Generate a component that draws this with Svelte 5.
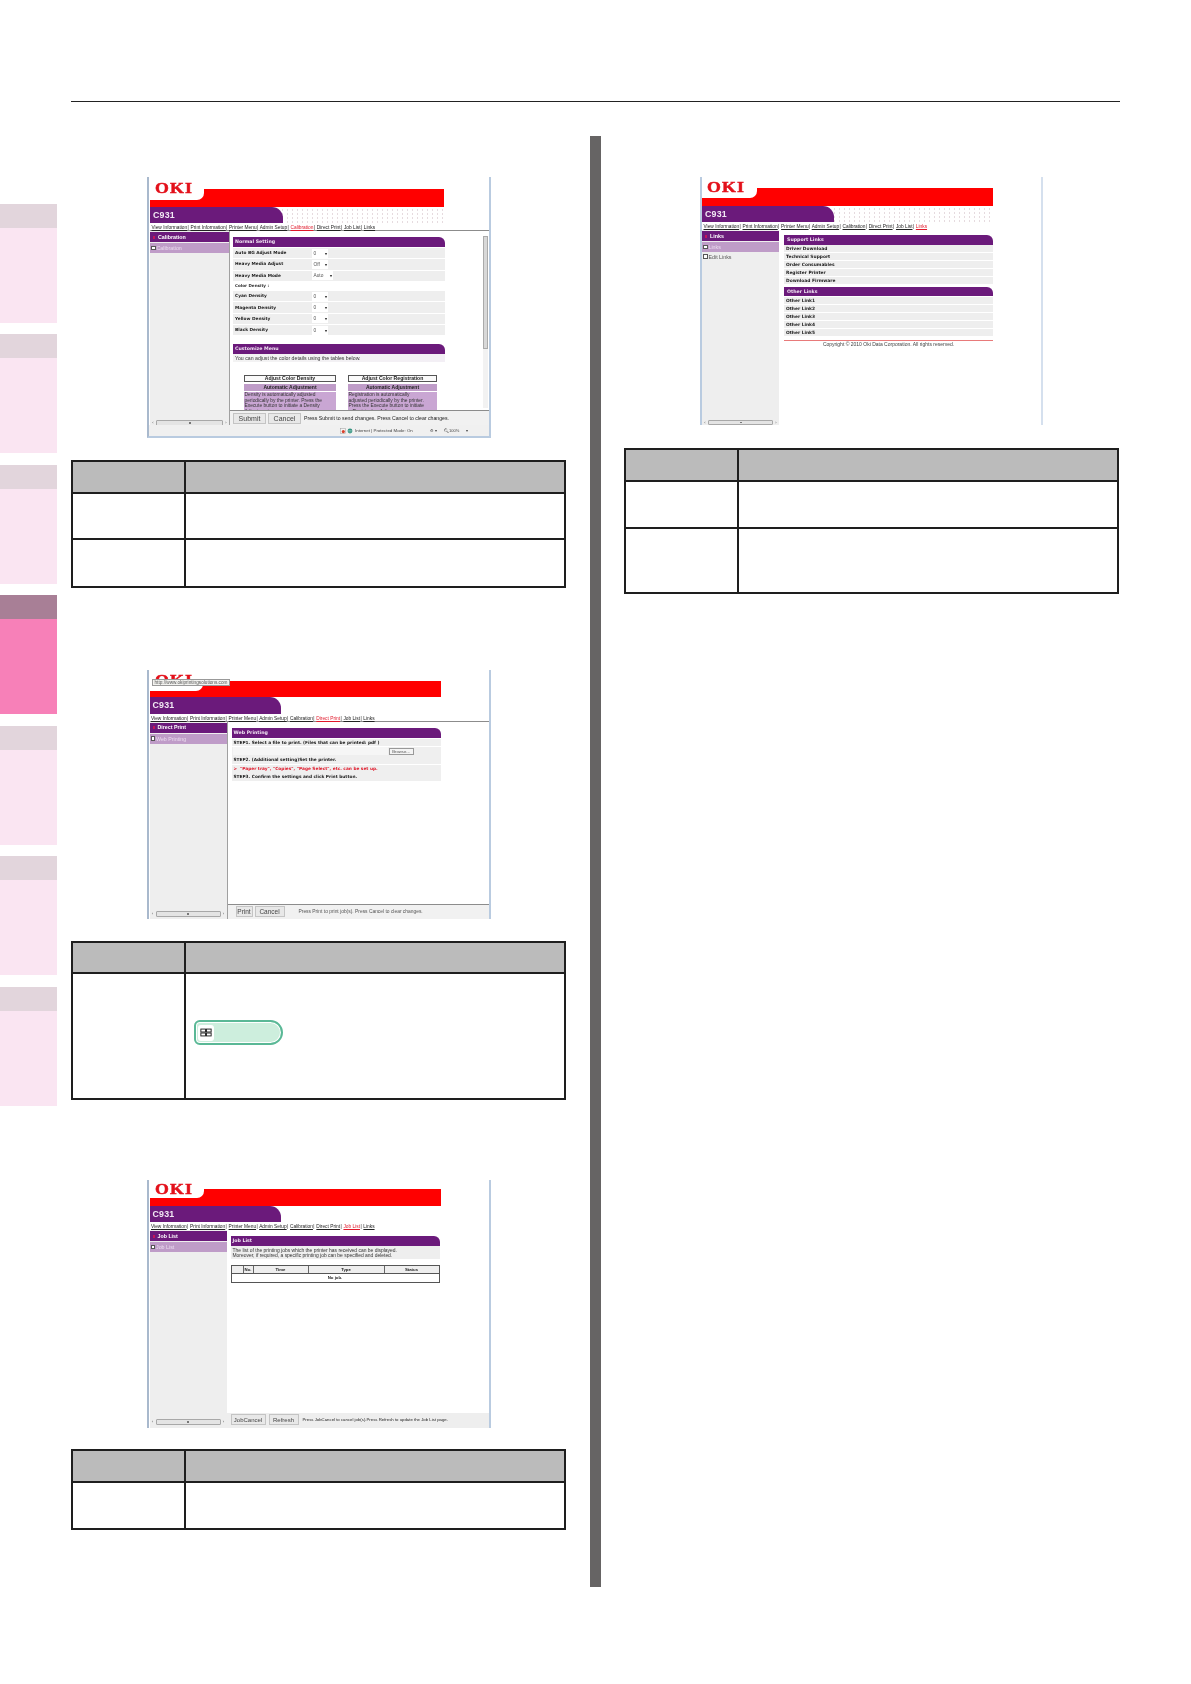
<script>
  const navItems = ['View Information', 'Print Information', 'Printer Menu', 'Admin Setup', 'Calibration', 'Direct Print', 'Job List', 'Links'];

  const tabs = [false, false, false, true, false, false, false];

  const settings = [
    { label: 'Auto BG Adjust Mode', value: '0' },
    { label: 'Heavy Media Adjust', value: 'Off' },
    { label: 'Heavy Media Mode', value: 'Auto', wide: true },
    { label: 'Color Density :', plain: true },
    { label: 'Cyan Density', value: '0' },
    { label: 'Magenta Density', value: '0' },
    { label: 'Yellow Density', value: '0' },
    { label: 'Black Density', value: '0' }
  ];

  const supportLinks = ['Driver Download', 'Technical Support', 'Order Consumables', 'Register Printer', 'Download Firmware'];
  const otherLinks = ['Other Link1', 'Other Link2', 'Other Link3', 'Other Link4', 'Other Link5'];
</script>

{#snippet masthead(active, dots)}
  <div class="mast">
    <div class="notch"><span class="oki">OKI</span></div>
  </div>
  <div class="model-row" class:dots>
    <div class="model">C931</div>
  </div>
  <div class="nav">
    {#each navItems as item, i}
      {#if i > 0}<span class="sep">|</span>{/if}
      <span class="nav-link" class:on={item === active}>{item}</span>
    {/each}
  </div>
{/snippet}

{#snippet sidebar(title, sub, extra)}
  <div class="side">
    <div class="side-head"><i class="tick"></i>{title}</div>
    <div class="side-sub"><i class="bullet"></i>{sub}</div>
    {#if extra}<div class="side-item"><i class="bullet hollow"></i>{extra}</div>{/if}
    <div class="hscroll"><span class="arrow">‹</span><div class="htrack"><i></i></div><span class="arrow">›</span></div>
  </div>
{/snippet}

{#snippet infoTable(rows)}
  <table class="info">
    <tbody>
      <tr class="head" style="height: {rows[0]}px"><th></th><th></th></tr>
      {#each rows.slice(1) as h}
        <tr style="height: {h}px"><td></td><td></td></tr>
      {/each}
    </tbody>
  </table>
{/snippet}

<div class="page">
  <aside class="tabs">
    {#each tabs as active}
      <div class="tab" class:active>
        <div class="tab-head"></div>
        <div class="tab-body"></div>
      </div>
    {/each}
  </aside>

  <main class="main">
    <div class="rule"></div>
    <div class="columns">
      <section class="col">
        <!-- calibration -->
        <div class="shot shot-a">
          {@render masthead('Calibration', true)}
          <div class="body">
            {@render sidebar('Calibration', 'Calibration')}
            <div class="pane">
              <div class="scrollarea">
                <div class="scroll-content">
                  <div class="sec-head">Normal Setting</div>
                  {#each settings as s}
                    {#if s.plain}
                      <div class="set-plain">{s.label}</div>
                    {:else}
                      <div class="set-row">
                        <span class="set-label">{s.label}</span>
                        <span class="sel" class:wide={s.wide}>{s.value}<b>▾</b></span>
                      </div>
                    {/if}
                  {/each}
                  <div class="sec-head second">Customize Menu</div>
                  <div class="desc">You can adjust the color details using the tables below.</div>
                  <div class="cards">
                    <div class="card">
                      <div class="card-title">Adjust Color Density</div>
                      <div class="card-sub">Automatic Adjustment</div>
                      <div class="card-text">Density is automatically adjusted<br />periodically by the printer. Press the<br />Execute button to initiate a Density<br />Adjustment.</div>
                    </div>
                    <div class="card right">
                      <div class="card-title">Adjust Color Registration</div>
                      <div class="card-sub">Automatic Adjustment</div>
                      <div class="card-text">Registration is automatically<br />adjusted periodically by the printer.<br />Press the Execute button to initiate<br />a Registration Adjustment.</div>
                    </div>
                  </div>
                </div>
                <div class="vscroll"><i></i></div>
              </div>
              <div class="foot">
                <span class="btn big">Submit</span>
                <span class="btn big">Cancel</span>
                <span class="foot-text">Press Submit to send changes. Press Cancel to clear changes.</span>
              </div>
            </div>
          </div>
          <div class="status">
            <svg class="st-icon" viewBox="0 0 10 10"><rect x="1" y="1" width="8" height="8" fill="#f4f4f4" stroke="#999" stroke-width=".8"/><circle cx="5.5" cy="6" r="2.6" fill="#d9412b"/></svg>
            <svg class="st-icon" viewBox="0 0 10 10"><circle cx="5" cy="5" r="4" fill="#2f8f7d"/><path d="M2 4h6M2 6.5h6" stroke="#bfe6dc" stroke-width=".8"/></svg>
            <span class="st-text">Internet | Protected Mode: On</span>
            <span class="st-right">⚙ ▾</span>
            <span class="st-zoom">🔍︎100%</span>
            <span class="st-drop">▾</span>
          </div>
        </div>

        {@render infoTable([32, 46, 48])}

        <!-- direct print -->
        <div class="shot shot-b">
          {@render masthead('Direct Print', false)}
          <div class="tooltip">http://www.okiprintingsolutions.com</div>
          <div class="body">
            {@render sidebar('Direct Print', 'Web Printing')}
            <div class="pane">
              <div class="scrollarea">
                <div class="scroll-content">
                  <div class="sec-head">Web Printing</div>
                  <div class="step">STEP1. Select a file to print. (Files that can be printed: pdf )</div>
                  <div class="step file"><i class="file-input"></i><span class="browse">Browse...</span></div>
                  <div class="step">STEP2. (Additional setting)Set the printer.</div>
                  <div class="step red">&gt;&nbsp;&nbsp;"Paper tray", "Copies", "Page Select", etc. can be set up.</div>
                  <div class="step">STEP3. Confirm the settings and click Print button.</div>
                </div>
              </div>
              <div class="foot">
                <span class="btn print">Print</span>
                <span class="btn cancel">Cancel</span>
                <span class="foot-text wide-gap">Press Print to print job(s). Press Cancel to clear changes.</span>
              </div>
            </div>
          </div>
        </div>

        <table class="info">
          <tbody>
            <tr class="head" style="height: 31px"><th></th><th></th></tr>
            <tr style="height: 126px">
              <td></td>
              <td class="note-cell">
                <div class="note">
                  <span class="note-icon">
                    <svg viewBox="0 0 14 10" width="12" height="9"><rect x="1" y="1" width="5.4" height="3.4" fill="#fff" stroke="#222" stroke-width="1.1"/><rect x="7.6" y="1" width="5.4" height="3.4" fill="#fff" stroke="#222" stroke-width="1.1"/><rect x="1" y="5.6" width="5.4" height="3.4" fill="#fff" stroke="#222" stroke-width="1.1"/><rect x="7.6" y="5.6" width="5.4" height="3.4" fill="#fff" stroke="#222" stroke-width="1.1"/></svg>
                  </span>
                </div>
              </td>
            </tr>
          </tbody>
        </table>

        <!-- job list -->
        <div class="shot shot-c">
          {@render masthead('Job List', false)}
          <div class="body">
            {@render sidebar('Job List', 'Job List')}
            <div class="pane">
              <div class="scrollarea">
                <div class="scroll-content">
                  <div class="sec-head">Job List</div>
                  <div class="job-desc">The list of the printing jobs which the printer has received can be displayed.<br />Moreover, if required, a specific printing job can be specified and deleted.</div>
                  <div class="jobs">
                    <div class="jobs-head">
                      <span class="c0"></span><span class="c1">No.</span><span class="c2">Time</span><span class="c3">Type</span><span class="c4">Status</span>
                    </div>
                    <div class="jobs-row">No job.</div>
                  </div>
                </div>
              </div>
              <div class="foot plain">
                <span class="btn job">JobCancel</span>
                <span class="btn refresh">Refresh</span>
                <span class="foot-text tiny">Press JobCancel to cancel job(s).Press Refresh to update the Job List page.</span>
              </div>
            </div>
          </div>
        </div>

        {@render infoTable([32, 47])}
      </section>

      <div class="bar"></div>

      <section class="col">
        <!-- links -->
        <div class="shot shot-d">
          {@render masthead('Links', true)}
          <div class="body">
            {@render sidebar('Links', 'Links', 'Edit Links')}
            <div class="pane">
              <div class="scroll-content">
                <div class="sec-head">Support Links</div>
                {#each supportLinks as link}
                  <div class="link-row">{link}</div>
                {/each}
                <div class="sec-head other">Other Links</div>
                {#each otherLinks as link}
                  <div class="link-row">{link}</div>
                {/each}
                <div class="copy">Copyright © 2010 Oki Data Corporation. All rights reserved.</div>
              </div>
            </div>
          </div>
        </div>

        {@render infoTable([32, 47, 65])}
      </section>
    </div>
  </main>
</div>

<style>
  :global(body) {
    margin: 0;
    background: #fff;
  }

  .page {
    display: flex;
    width: 1191px;
    height: 1684px;
    overflow: hidden;
    background: #fff;
  }

  /* side index tabs */
  .tabs {
    width: 57px;
    padding-top: 204px;
    display: flex;
    flex-direction: column;
    gap: 11.6px;
    flex: none;
  }
  .tab {
    height: 118.9px;
    display: flex;
    flex-direction: column;
  }
  .tab-head {
    height: 24px;
    background: #e2d5dc;
  }
  .tab-body {
    flex: 1;
    background: #fae5f2;
  }
  .tab.active .tab-head {
    background: #a87f96;
  }
  .tab.active .tab-body {
    background: #f780b8;
  }

  .main {
    margin-left: 14px;
    width: 1049px;
    padding-top: 101px;
  }
  .rule {
    height: 1px;
    background: #222;
  }
  .columns {
    display: flex;
    margin-top: 34px;
  }
  .col {
    width: 495px;
    flex: none;
  }
  .bar {
    width: 11px;
    height: 1451px;
    margin: 0 23px 0 24px;
    background: #666464;
    flex: none;
  }

  /* tables */
  .info {
    display: table;
    width: 495px;
    border-collapse: collapse;
    table-layout: fixed;
  }
  .info th,
  .info td {
    border: 2px solid #1e1e1e;
    padding: 0;
    vertical-align: top;
  }
  .info th:first-child,
  .info td:first-child {
    width: 111px;
  }
  .info .head th {
    background: #bbb;
  }
  .note-cell {
    padding: 46px 0 0 8px !important;
  }
  .note {
    width: 89px;
    height: 25px;
    box-sizing: border-box;
    border: 2px solid #5ab896;
    border-radius: 6px 13px 13px 6px;
    background: #cdeedd;
    box-shadow: inset 0 0 0 1px #fff;
    display: flex;
    align-items: center;
    padding-left: 2px;
  }
  .note-icon {
    width: 16px;
    height: 16px;
    background: #fff;
    border-radius: 3px;
    display: flex;
    align-items: center;
    justify-content: center;
  }

  /* browser screenshots */
  .shot {
    position: relative;
    width: 344px;
    box-sizing: border-box;
    margin-left: 76px;
    border-left: 2px solid #a9b9cd;
    border-right: 2px solid #b9cbe0;
    padding-left: var(--inset);
    display: flex;
    flex-direction: column;
    overflow: hidden;
    font-family: "Liberation Sans", Arial, sans-serif;
    color: #1c1c1c;
    filter: blur(0.35px);
    background: #fff;
  }
  .shot-a {
    --inset: 1px;
    --mast: 30px;
    --red-top: 12px;
    --red-w: 294px;
    --notch-w: 54px;
    --notch-h: 23px;
    --oki-top: 3px;
    --purple-w: 133px;
    --purple-h: 16px;
    --side-w: 79px;
    --hs-h: 4px;
    --hs-pad: 0px;
    height: 261px;
    margin-top: 41px;
    margin-bottom: 22px;
    border-bottom: 2px solid #b9cbe0;
  }
  .shot-b {
    --inset: 0.5px;
    --mast: 27px;
    --red-top: 11px;
    --red-w: 291px;
    --notch-w: 53px;
    --notch-h: 21px;
    --oki-top: 2px;
    --purple-w: 131px;
    --purple-h: 17px;
    --side-w: 77px;
    --hs-h: 7px;
    --hs-pad: 2px;
    height: 249px;
    margin-top: 81.5px;
    margin-bottom: 22.5px;
  }
  .shot-c {
    --inset: 0.5px;
    --mast: 26px;
    --red-top: 9px;
    --red-w: 291px;
    --notch-w: 54px;
    --notch-h: 18px;
    --oki-top: 1px;
    --purple-w: 131px;
    --purple-h: 16px;
    --side-w: 77px;
    --hs-h: 8px;
    --hs-pad: 4px;
    height: 248px;
    margin-top: 80px;
    margin-bottom: 21px;
  }
  .shot-d {
    --inset: 0;
    --mast: 29px;
    --red-top: 11px;
    --red-w: 291px;
    --notch-w: 55px;
    --notch-h: 21px;
    --oki-top: 2px;
    --purple-w: 132px;
    --purple-h: 16px;
    --side-w: 77px;
    --hs-h: 5px;
    --hs-pad: 0px;
    width: 343px;
    height: 248px;
    margin-top: 41px;
    margin-bottom: 22.5px;
    border-left-color: #b9cbe0;
    border-right-color: #d5e0ee;
  }

  .mast {
    width: var(--red-w);
    height: var(--mast);
    flex: none;
    background: linear-gradient(#fff var(--red-top), #f00 var(--red-top));
  }
  .notch {
    width: var(--notch-w);
    height: var(--notch-h);
    background: #fff;
    border-bottom-right-radius: 7px;
    overflow: hidden;
  }
  .oki {
    display: block;
    margin-left: 5px;
    padding-top: var(--oki-top);
    font: bold 15.5px/15.5px "Liberation Serif", "Times New Roman", serif;
    letter-spacing: 1px;
    color: #e3101a;
    -webkit-text-stroke: 0.5px #e3101a;
    transform: scaleX(1.15);
    transform-origin: left center;
  }
  .model-row {
    width: var(--red-w);
    height: var(--purple-h);
    flex: none;
  }
  .model-row.dots {
    background: radial-gradient(circle, #e6dbdf 0.5px, transparent 0.8px) 0 1px / 5px 4px;
  }
  .model {
    width: var(--purple-w);
    height: 100%;
    box-sizing: border-box;
    padding-left: 3px;
    background: #6b1a7b;
    border-top-right-radius: 11px;
    color: #f2e9f4;
    font: bold 8.8px/16px "Liberation Sans", sans-serif;
    letter-spacing: 0.2px;
  }
  .nav {
    height: 8px;
    box-sizing: border-box;
    flex: none;
    padding: 2px 0 0 1.5px;
    font-size: 4.8px;
    line-height: 5px;
    white-space: nowrap;
    border-bottom: 1px solid #8c8c8c;
    color: #222;
  }
  .shot-c .nav,
  .shot-d .nav {
    border-bottom: 0;
  }
  .nav-link {
    text-decoration: underline;
  }
  .nav-link.on {
    color: #e0182a;
  }
  .sep {
    margin: 0 0.4px;
  }

  .body {
    flex: 1;
    min-height: 0;
    display: flex;
  }
  .side {
    width: var(--side-w);
    flex: none;
    background: #eee;
    display: flex;
    flex-direction: column;
    color: #fff;
    font-size: 5.3px;
    border-right: 1px solid #a0a0a0;
  }
  .shot-c .side,
  .shot-d .side {
    border-right: 0;
  }
  .side-head {
    height: 10px;
    margin-top: 1px;
    background: #6b1a7b;
    font-weight: bold;
    line-height: 9px;
    display: flex;
    align-items: center;
  }
  .tick {
    width: 2px;
    height: 3px;
    margin: 0 3px 0 3px;
    background: #c4145a;
  }
  .side-sub {
    height: 10px;
    margin-top: 1px;
    background: #bf9cc8;
    color: #ebdcef;
    display: flex;
    align-items: center;
    line-height: 10px;
  }
  .side-item {
    margin-top: 1px;
    height: 7px;
    color: #555;
    display: flex;
    align-items: center;
  }
  .bullet {
    width: 2.5px;
    height: 2.5px;
    margin: 0 1px 0 1px;
    background: #fff;
    border: 0.5px solid #555;
  }
  .hscroll {
    margin-top: auto;
    height: var(--hs-h);
    box-sizing: border-box;
    padding: 0 1px var(--hs-pad);
    display: flex;
    align-items: center;
    gap: 1px;
    color: #555;
    font-size: 4px;
  }
  .htrack {
    flex: 1;
    height: 3.5px;
    border: 0.5px solid #a8a8a8;
    border-radius: 1px;
    background: #e4e4e4;
    display: flex;
    justify-content: center;
    align-items: center;
  }
  .htrack i {
    width: 2px;
    height: 1.5px;
    background: #777;
  }
  .arrow {
    width: 4px;
    line-height: 4px;
    text-align: center;
  }

  .pane {
    flex: 1;
    min-width: 0;
    display: flex;
    flex-direction: column;
  }
  .scrollarea {
    flex: 1;
    min-height: 0;
    display: flex;
    overflow: hidden;
  }
  .scroll-content {
    width: 212px;
    margin-left: 3px;
    padding-top: 6px;
    flex: none;
  }
  .shot-b .scroll-content {
    width: 209px;
    margin-left: 4px;
  }
  .shot-b .sec-head {
    margin-bottom: 1px;
  }
  .shot-c .scroll-content {
    width: 209px;
    margin-left: 4px;
  }
  .shot-d .scroll-content {
    margin-left: 5px;
    width: 209px;
    padding-top: 5px;
  }
  .sec-head {
    height: 10px;
    box-sizing: border-box;
    padding-left: 2px;
    background: #6b1a7b;
    border-top-right-radius: 6px;
    color: #f1e6f3;
    font: bold 4.7px/10px "DejaVu Sans", sans-serif;
  }
  .sec-head.second {
    margin-top: 9px;
  }
  .set-row {
    height: 10.3px;
    margin-top: 1px;
    background: #eee;
    display: flex;
    align-items: center;
    font: bold 4.3px/10px "DejaVu Sans", sans-serif;
  }
  .set-label {
    width: 79px;
    padding-left: 2px;
    box-sizing: border-box;
  }
  .set-plain {
    height: 9.3px;
    padding-left: 2px;
    font: bold 4.1px/10px "DejaVu Sans", sans-serif;
    color: #333;
  }
  .sel {
    width: 16px;
    height: 9px;
    box-sizing: border-box;
    padding: 0 1.5px;
    background: #fff;
    display: flex;
    justify-content: space-between;
    align-items: center;
    font: 4.8px/9px "Liberation Sans", sans-serif;
    color: #555;
  }
  .sel.wide {
    width: 21px;
  }
  .sel b {
    font-size: 4px;
    color: #333;
  }
  .desc {
    height: 8px;
    padding-left: 2px;
    background: linear-gradient(90deg, #f3f3f3, #f3eff5);
    font-size: 5.2px;
    line-height: 8px;
    color: #333;
    white-space: nowrap;
  }
  .cards {
    display: flex;
    margin: 13px 0 0 11px;
    gap: 12px;
  }
  .card {
    width: 92px;
    flex: none;
  }
  .card.right {
    width: 89px;
  }
  .card-title {
    height: 7px;
    box-sizing: border-box;
    border: 0.7px solid #555;
    background: #fafafa;
    text-align: center;
    font: bold 5.1px/5.6px "Liberation Sans", sans-serif;
    white-space: nowrap;
  }
  .card-sub {
    height: 7px;
    margin-top: 2px;
    background: #bf9cc8;
    text-align: center;
    font: bold 5px/7px "Liberation Sans", sans-serif;
  }
  .card-text {
    margin-top: 1px;
    padding: 0 0.5px;
    background: #c9a6d3;
    font-size: 4.9px;
    line-height: 5.4px;
    color: #333;
    white-space: nowrap;
  }
  .vscroll {
    width: 5px;
    margin: 5px 0 2px 38px;
    background: #f2f2f2;
    flex: none;
  }
  .vscroll i {
    display: block;
    height: 113px;
    background: #d8d8d8;
    border: 0.5px solid #aaa;
    box-sizing: border-box;
  }

  .foot {
    height: 15px;
    flex: none;
    box-sizing: border-box;
    border-top: 1px solid #8c8c8c;
    background: #f1f1f1;
    display: flex;
    align-items: center;
    padding-left: 3px;
    gap: 2px;
  }
  .shot-b .foot {
    padding-left: 8px;
  }
  .foot.plain {
    border-top: 0;
    background: #eee;
    padding-left: 4px;
    padding-bottom: 3px;
  }
  .btn {
    height: 11px;
    box-sizing: border-box;
    background: #e8e8e8;
    border: 0.5px solid #c4c4c4;
    text-align: center;
    font-size: 6px;
    line-height: 10px;
    color: #444;
  }
  .btn.big {
    width: 33px;
    font-size: 7px;
  }
  .btn.print {
    width: 17px;
    font-size: 6.5px;
  }
  .btn.cancel {
    width: 30px;
    font-size: 6.5px;
  }
  .btn.job {
    width: 35px;
  }
  .btn.refresh {
    width: 30px;
    margin-left: 1px;
  }
  .foot-text {
    margin-left: 1px;
    font-size: 5.2px;
    white-space: nowrap;
    color: #222;
  }
  .foot-text.wide-gap {
    margin-left: 12px;
    font-size: 4.9px;
    color: #555;
  }
  .foot-text.tiny {
    margin-left: 2px;
    font-size: 4.3px;
  }

  .status {
    height: 11px;
    flex: none;
    display: flex;
    align-items: center;
    background: #f0f0f0;
    padding-left: 191px;
    font-size: 4.4px;
    color: #444;
    margin-left: -1px;
  }
  .st-icon {
    width: 6px;
    height: 6px;
    margin-right: 1px;
  }
  .st-text {
    margin-left: 1px;
    width: 75px;
    white-space: nowrap;
  }
  .st-right {
    width: 14px;
  }
  .st-zoom {
    width: 22px;
    font-size: 4px;
  }

  .tooltip {
    position: absolute;
    left: 3px;
    top: 9px;
    width: 78px;
    height: 7.5px;
    box-sizing: border-box;
    border: 0.5px solid #999;
    background: #f3f3f0;
    font-size: 4.7px;
    line-height: 6.5px;
    text-align: center;
    color: #555;
    white-space: nowrap;
  }

  .step {
    height: 7.8px;
    margin-bottom: 0.6px;
    padding-left: 2px;
    background: #efefef;
    font: bold 4.3px/8px "DejaVu Sans", sans-serif;
    white-space: nowrap;
  }
  .step.file {
    height: 9px;
    padding-left: 1px;
    display: flex;
    align-items: center;
    gap: 1px;
  }
  .file-input {
    width: 155px;
    height: 8px;
    background: #f6f6f6;
  }
  .browse {
    width: 25px;
    height: 7px;
    box-sizing: border-box;
    border: 0.5px solid #999;
    background: #f4f4f4;
    font: 4.2px/6px "Liberation Sans", sans-serif;
    text-align: center;
    color: #555;
  }
  .step.red {
    color: #e0182a;
  }

  .job-desc {
    padding: 1.5px 2px 1px;
    background: #eee;
    font-size: 4.95px;
    line-height: 5px;
    color: #333;
    white-space: nowrap;
  }
  .jobs {
    margin-top: 6px;
    border: 0.7px solid #555;
    border-width: 0.7px 0.7px 1px;
    font: bold 4.3px/7px "Liberation Sans", sans-serif;
    text-align: center;
  }
  .jobs-head {
    display: grid;
    grid-template-columns: 12px 10px 55px 76px 1fr;
    background: #eee;
    border-bottom: 0.7px solid #555;
  }
  .jobs-head span {
    border-right: 0.7px solid #666;
    height: 7px;
  }
  .jobs-head span:last-child {
    border-right: 0;
  }
  .jobs-row {
    height: 8px;
    line-height: 8px;
  }

  .link-row {
    height: 7.3px;
    margin-top: 0.6px;
    padding-left: 2px;
    background: #eee;
    font: bold 4.4px/7.3px "DejaVu Sans", sans-serif;
    white-space: nowrap;
  }
  .sec-head.other {
    margin-top: 3px;
  }
  .shot-d .sec-head {
    height: 9.5px;
    line-height: 9.5px;
    padding-left: 3px;
  }
  .copy {
    margin-top: 4px;
    border-top: 0.7px solid #e87a7a;
    font-size: 5px;
    line-height: 6px;
    text-align: center;
    color: #444;
    white-space: nowrap;
  }
</style>
